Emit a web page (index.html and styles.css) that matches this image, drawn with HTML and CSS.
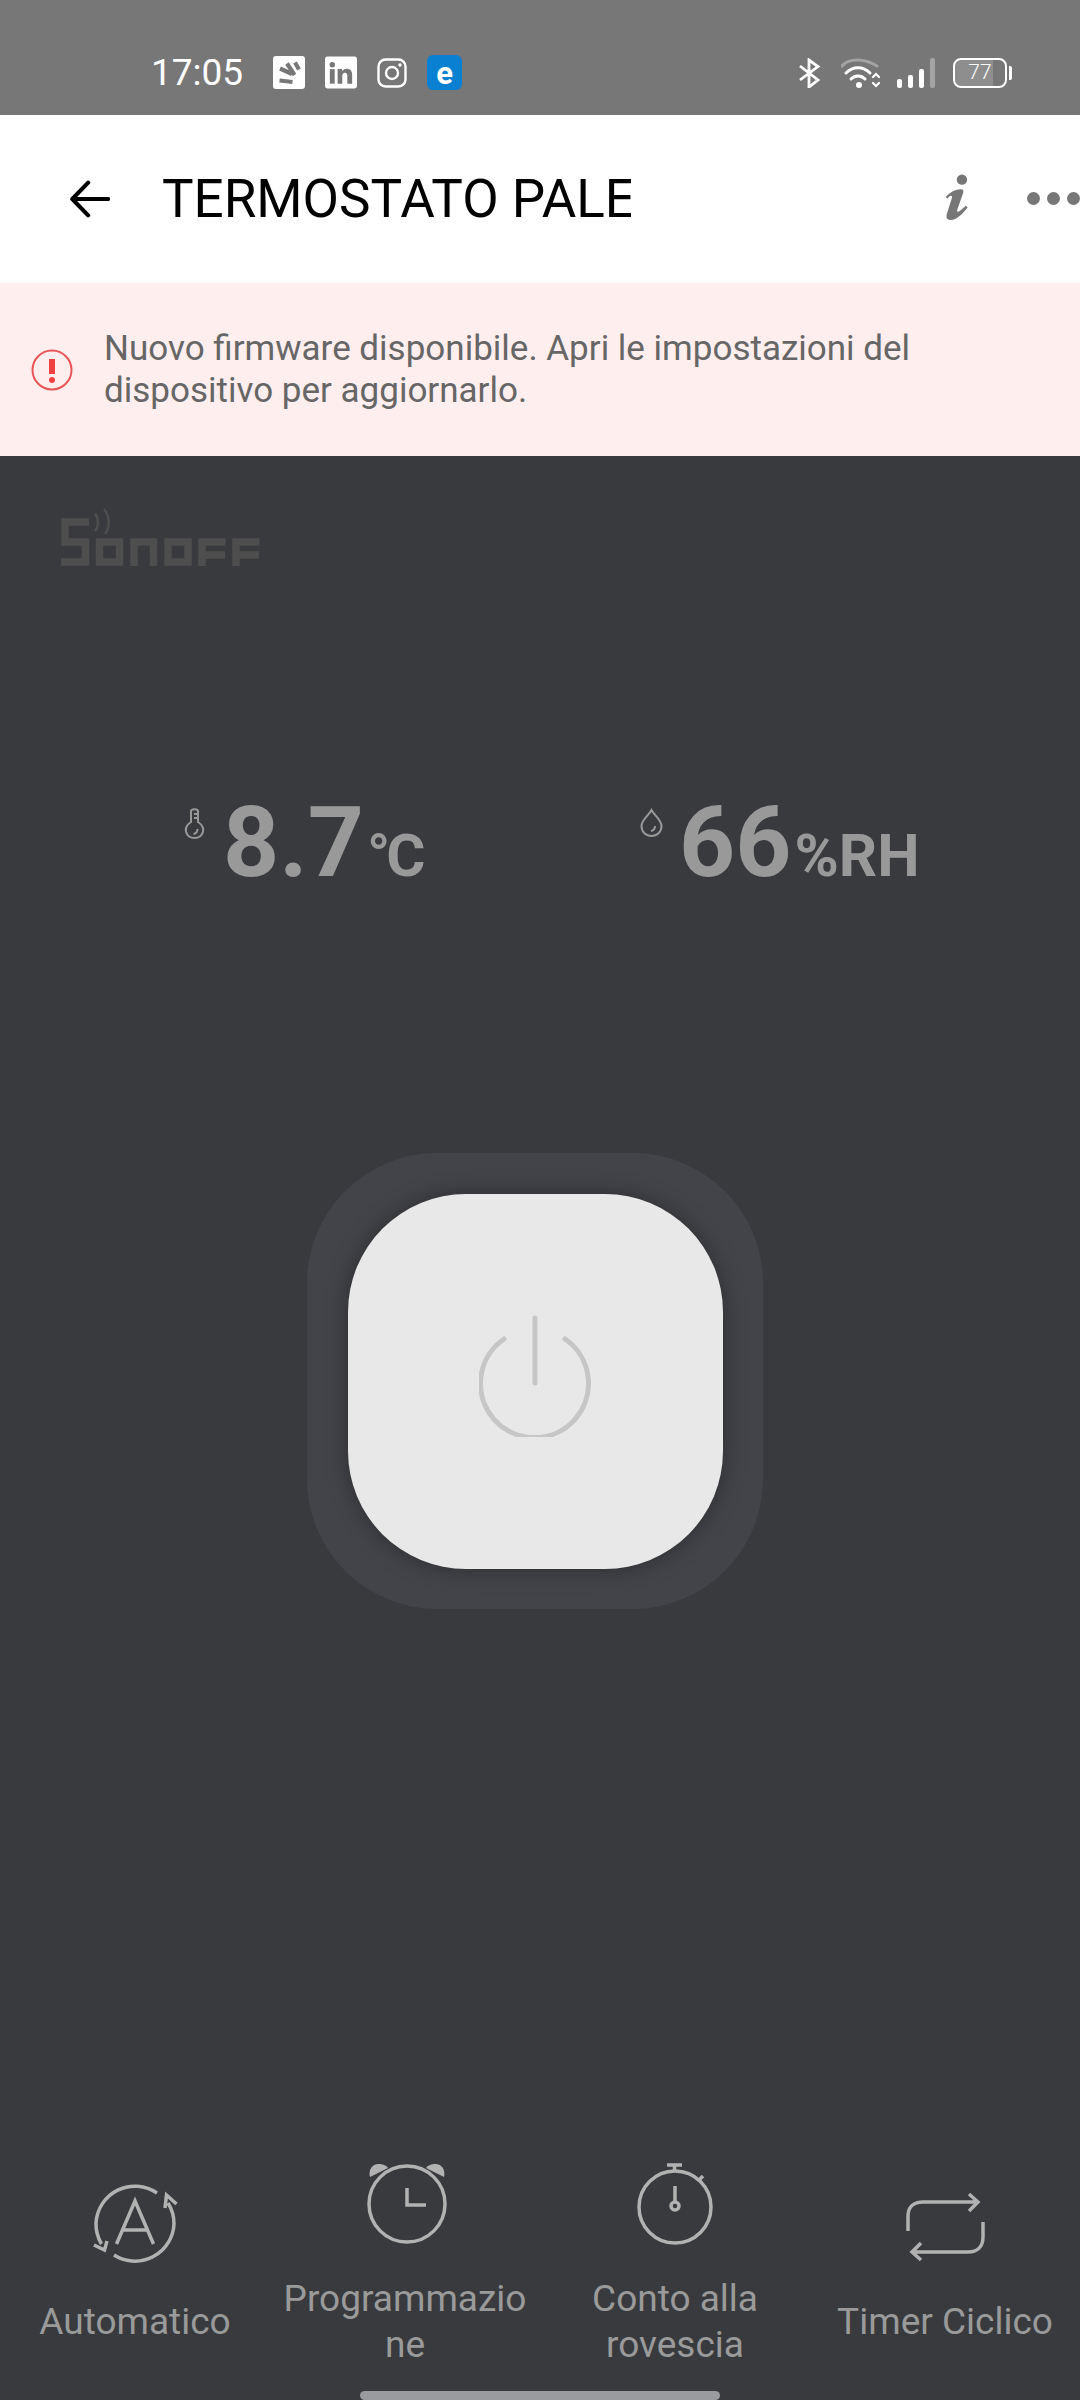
FILE: index.html
```html
<!DOCTYPE html>
<html lang="en">
<head>
    <meta charset="UTF-8">
    <meta name="viewport" content="width=device-width, initial-scale=1.0">
    <title>Termostato</title>
    <link rel="stylesheet" href="styles.css">
</head>
<body>
    <div class="status-bar">
        <div class="status-left">
            <span class="status-time">17:05</span>
            <svg class="ic-app" viewBox="0 0 32 33">
                <rect width="32" height="33" rx="3" fill="#fff"/>
                <path d="M7 12.5 L19 18 M6.5 24.5 L19.5 26 M14 7.5 L21.5 19 M22 6.5 L26 13.5" stroke="#777" stroke-width="4.2" fill="none"/>
            </svg>
            <svg class="ic-app" viewBox="0 0 33 33">
                <rect width="33" height="33" rx="2.5" fill="#fff"/>
                <circle cx="7.5" cy="8.5" r="2.8" fill="#777"/>
                <rect x="5" y="13" width="5" height="15" fill="#777"/>
                <path d="M13 13h4.6v2.2c1-1.5 2.6-2.6 4.9-2.6 4 0 5.5 2.6 5.5 6.6V28h-5v-7.8c0-2-.6-3.4-2.4-3.4-1.900 0-2.800 1.400-2.800 3.400V28H13z" fill="#777"/>
            </svg>
            <svg class="ic-app ic-insta" viewBox="0 0 30 30" fill="none" stroke="#fff">
                <rect x="1.500" y="1.500" width="27" height="27" rx="7" stroke-width="2.400"/>
                <circle cx="15" cy="15" r="6" stroke-width="2.400"/>
                <circle cx="23" cy="7" r="1.700" fill="#fff" stroke="none"/>
            </svg>
            <span class="ic-ewelink">e</span>
        </div>
        <div class="status-right">
            <svg class="ic-bt" viewBox="0 0 23 30" fill="none" stroke="#fff" stroke-width="2.800">
                <path d="M2 8 L20 22 L11 29 V2 L20 8.500 L2 22"/>
            </svg>
            <svg class="ic-wifi" viewBox="0 0 39 30" fill="none" stroke="#fff" stroke-linecap="round">
                <path d="M1 7 C8 -1 23 -1 36 7" stroke="#a3a3a3" stroke-width="3" transform="translate(0 1)"/>
                <path d="M5 15 C12 8 22 8 29 15" stroke-width="3"/>
                <path d="M10 21 C14 17 20 17 24 21" stroke-width="3"/>
                <circle cx="18" cy="27" r="3" fill="#fff" stroke="none"/>
                <path d="M32 19 L35 16 L38 19 M32 25 L35 28 L38 25" stroke-width="2.200"/>
            </svg>
            <div class="signal">
                <span class="bar bar-1"></span>
                <span class="bar bar-2"></span>
                <span class="bar bar-3"></span>
                <span class="bar bar-4"></span>
            </div>
            <div class="battery">
                <div class="battery-body">
                    <span class="battery-level">77</span>
                </div>
                <span class="battery-cap"></span>
            </div>
        </div>
    </div>

    <div class="app-bar">
        <svg class="ic-back" viewBox="0 0 44 40" fill="none" stroke="#000" stroke-width="4.500" stroke-linecap="round" stroke-linejoin="round">
            <path d="M42 20 H3 M20 2 L2.500 20 L20 38"/>
        </svg>
        <h1 class="device-name">TERMOSTATO PALES...</h1>
        <svg class="ic-info" viewBox="0 0 28 54" fill="#777">
            <circle cx="19.500" cy="7" r="6"/>
            <path d="M1 27 C6 21 13 17.500 19 18 C21 18.200 21.500 20 21 22 L14 42 C13.500 44 15 44.500 17 43 L24 37 L26 39 C20 47 13 53 7 53.500 C2.500 54 1 51 2 47 L8 28 C8.500 25.500 7 25 5 26.500 L2.500 29 Z"/>
        </svg>
        <div class="more-dots">
            <span></span><span></span><span></span>
        </div>
    </div>

    <div class="notice">
        <svg class="ic-alert" viewBox="0 0 42 42" fill="none" stroke="#e85555">
            <circle cx="21" cy="21" r="19.500" stroke-width="2"/>
            <path d="M21 10 V25" stroke-width="6" stroke="#ee4040"/>
            <circle cx="21" cy="31" r="3" fill="#ee4040" stroke="none"/>
        </svg>
        <p>Nuovo firmware disponibile. Apri le impostazioni del dispositivo per aggiornarlo.</p>
    </div>

    <div class="device-panel">
        <svg class="logo" viewBox="0 0 210 70" fill="none" stroke="#4e4e4e" stroke-width="7.500" role="img" aria-label="Sonoff">
            <path d="M34 17 H10 V37 H30.500 V57 H6"/>
            <rect x="44.500" y="37" width="20" height="20"/>
            <path d="M79 61 V37 H98.500 V61"/>
            <rect x="113" y="37" width="20" height="20"/>
            <path d="M147 61 V37 H170.500 M147 50 H170"/>
            <path d="M181 61 V37 H204.500 M181 50 H204"/>
            <path d="M40 9 C44 13 44 21 40 26 M49 4 C55 11 55 23 50 29" stroke-width="2.500"/>
        </svg>

        <div class="readings">
            <div class="reading">
                <svg class="ic-reading ic-thermo" viewBox="0 0 21 31" fill="none" stroke="#999" stroke-width="2">
                    <path d="M7 3.500 C7 0.500 14 0.500 14 3.500 V14 C23 20 19 30 10.500 30 C2 30 -2 20 7 14 Z"/>
                    <path d="M10 6 H14 M10 10 H14 M13.500 21 C13.500 24 12 25.500 9.500 26"/>
                </svg>
                <span class="value">8.7</span><span class="unit unit-temp">°C</span>
            </div>
            <div class="reading">
                <svg class="ic-reading ic-drop" viewBox="0 0 23 29" fill="none" stroke="#999" stroke-width="2">
                    <path d="M11.500 2 C9 7 1.500 12 1.500 18 C1.500 24 6 28 11.500 28 C17 28 21.500 24 21.500 18 C21.500 12 14 7 11.500 2 Z"/>
                    <path d="M15 18 C15 21 13.500 22.500 11 23"/>
                </svg>
                <span class="value">66</span><span class="unit">%RH</span>
            </div>
        </div>

        <div class="power-wrap">
            <button class="power-btn">
                <svg class="ic-power" viewBox="0 0 112 122" fill="none" stroke="#c6c6c6" stroke-width="5" stroke-linecap="round">
                    <path d="M56 3 V68"/>
                    <path d="M25 24 A54 54 0 1 0 86 24"/>
                </svg>
            </button>
        </div>

        <div class="actions">
            <div class="action">
                <svg class="ic-action" viewBox="0 0 90 90">
                    <path d="M67 14 A39 39 0 0 0 6 44 A39 39 0 0 0 11.500 65 M24 76 A39 39 0 0 0 84 45 A39 39 0 0 0 78 24"/>
                    <path d="M4 66 L14.500 71 L17 62 M75 29 L76.500 16 L86.500 25"/>
                    <path d="M26.500 65 L45 22 L63.500 65 M32.500 51 H57.500"/>
                </svg>
                <span>Automatico</span>
            </div>
            <div class="action">
                <svg class="ic-action" viewBox="0 0 90 90">
                    <circle cx="47" cy="48" r="38"/>
                    <path d="M47 32 V49 H66"/>
                    <path class="fill" d="M10 21 C8 13 13 7 20 8 C24 8.500 27 10 28 12 Z M84 21 C86 13 81 7 74 8 C70 8.500 67 10 66 12 Z"/>
                </svg>
                <span>Programmazione</span>
            </div>
            <div class="action">
                <svg class="ic-action" viewBox="0 0 90 90">
                    <circle cx="45" cy="51" r="36"/>
                    <path d="M37 9 H52 M44.500 9 V15 M69 24 L73 20"/>
                    <path d="M45 30 V46"/>
                    <circle cx="45" cy="50" r="4"/>
                </svg>
                <span>Conto alla rovescia</span>
            </div>
            <div class="action">
                <svg class="ic-action" viewBox="0 0 90 90">
                    <path d="M8 52 V37 C8 28 14 23 23 23 H78 M69 15 L78 23 L69 32"/>
                    <path d="M83 43 V58 C83 68 77 73 68 73 H12 M21 64 L12 73 L21 81"/>
                </svg>
                <span>Timer Ciclico</span>
            </div>
        </div>

        <div class="home-bar"></div>
    </div>
</body>
</html>
```

FILE: styles.css
```css
* {
    box-sizing: border-box;
}

body {
    margin: 0;
    width: 1080px;
    height: 2400px;
    display: flex;
    flex-direction: column;
    font-family: 'Roboto', sans-serif;
    background-color: #393a3e;
    overflow: hidden;
}

/* Status bar */
.status-bar {
    height: 115px;
    background-color: #777777;
    color: white;
    display: flex;
    justify-content: space-between;
    align-items: center;
    padding: 30px 68px 0 151px;
}

.status-left {
    display: flex;
    align-items: center;
}

.status-time {
    font-size: 37px;
    width: 122px;
}

.ic-app {
    width: 32px;
    height: 33px;
    margin-right: 20px;
    display: block;
}

.ic-insta {
    width: 30px;
    height: 30px;
}

.ic-ewelink {
    width: 35px;
    height: 35px;
    border-radius: 6px;
    background-color: #0a80d2;
    font-size: 31px;
    font-weight: 700;
    line-height: 38px;
    text-align: center;
}

.status-right {
    display: flex;
    align-items: center;
}

.ic-bt {
    width: 23px;
    height: 30px;
    margin-right: 20px;
}

.ic-wifi {
    width: 39px;
    height: 30px;
    margin-right: 17px;
}

.signal {
    display: flex;
    align-items: flex-end;
    gap: 6px;
    height: 30px;
    margin-right: 18px;
}

.bar {
    width: 5px;
    background-color: white;
    border-radius: 2px;
}

.bar-1 { height: 9px; }
.bar-2 { height: 13px; }
.bar-3 { height: 19px; }
.bar-4 { height: 30px; background-color: #a3a3a3; }

.battery {
    display: flex;
    align-items: center;
    gap: 2px;
}

.battery-body {
    width: 54px;
    height: 30px;
    border: 2.5px solid white;
    border-radius: 8px;
    background: linear-gradient(to right, #8e8e8e 77%, transparent 77%);
    background-clip: padding-box;
    text-align: center;
}

.battery-level {
    display: block;
    font-size: 21px;
    font-weight: 300;
    line-height: 25px;
}

.battery-cap {
    width: 3px;
    height: 14px;
    background-color: white;
    border-radius: 0 2px 2px 0;
}

/* App bar */
.app-bar {
    height: 168px;
    background-color: white;
    display: flex;
    align-items: center;
    padding-left: 70px;
}

.ic-back {
    width: 46px;
    height: 42px;
    margin-right: 52px;
}

.device-name {
    width: 540px;
    margin: 0;
    font-size: 53px;
    font-weight: 400;
    color: black;
    white-space: nowrap;
    overflow: hidden;
}

.ic-info {
    width: 28px;
    height: 54px;
    margin: -5px 0 0 314px;
}

.more-dots {
    display: flex;
    gap: 7px;
    margin: -2px 0 0 58px;
}

.more-dots span {
    width: 13px;
    height: 13px;
    border-radius: 50%;
    background-color: #777777;
}

/* Firmware notice */
.notice {
    height: 173px;
    background-color: #ffeeee;
    display: flex;
    align-items: center;
    padding-left: 31px;
}

.ic-alert {
    width: 42px;
    height: 42px;
    flex-shrink: 0;
    margin-right: 31px;
}

.notice p {
    margin: 0;
    width: 920px;
    font-size: 35px;
    line-height: 42px;
    color: #666666;
}

/* Main panel */
.device-panel {
    flex: 1;
    display: flex;
    flex-direction: column;
}

.logo {
    width: 210px;
    height: 70px;
    margin: 49px 0 0 55px;
    display: block;
}

.readings {
    display: grid;
    grid-template-columns: 456px 1fr;
    padding-left: 184px;
    margin-top: 218px;
}

.reading {
    display: flex;
    align-items: baseline;
    color: #999999;
    font-weight: 700;
    line-height: 100px;
}

.ic-reading {
    align-self: flex-start;
    margin-top: 15px;
}

.ic-thermo {
    width: 21px;
    height: 31px;
    margin-right: 18px;
}

.ic-drop {
    width: 23px;
    height: 29px;
    margin-right: 16px;
}

.value {
    font-size: 98px;
}

.unit {
    font-size: 60px;
    margin-left: 3px;
}

.unit-temp {
    letter-spacing: -4px;
}

.power-wrap {
    width: 456px;
    height: 456px;
    margin: 247px 0 0 307px;
    background-color: #434449;
    border-radius: 130px;
    display: flex;
    justify-content: center;
    align-items: center;
}

.power-btn {
    width: 375px;
    height: 375px;
    border: none;
    padding: 0;
    background-color: #e8e8e8;
    border-radius: 118px;
    box-shadow: 0 0 22px rgba(0, 0, 0, 0.35);
    display: flex;
    justify-content: center;
    align-items: flex-start;
}

.ic-power {
    width: 112px;
    height: 122px;
    margin-top: 121px;
}

/* Bottom actions */
.actions {
    display: grid;
    grid-template-columns: repeat(4, 270px);
    align-items: center;
    min-height: 212px;
    margin-top: 547px;
}

.action {
    display: flex;
    flex-direction: column;
    align-items: center;
    color: #9a9a9a;
    font-size: 37px;
    line-height: 46px;
    text-align: center;
    word-break: break-all;
}

.action span {
    width: 256px;
    word-break: normal;
    overflow-wrap: anywhere;
}

.ic-action {
    width: 90px;
    height: 90px;
    margin-bottom: 30px;
    fill: none;
    stroke: #b2b2b2;
    stroke-width: 3.5;
}

.ic-action .fill {
    fill: #b2b2b2;
    stroke: none;
}

.home-bar {
    width: 360px;
    height: 9px;
    margin: 23px 0 0 360px;
    background-color: #9a9b9e;
    border-radius: 5px;
}
```
